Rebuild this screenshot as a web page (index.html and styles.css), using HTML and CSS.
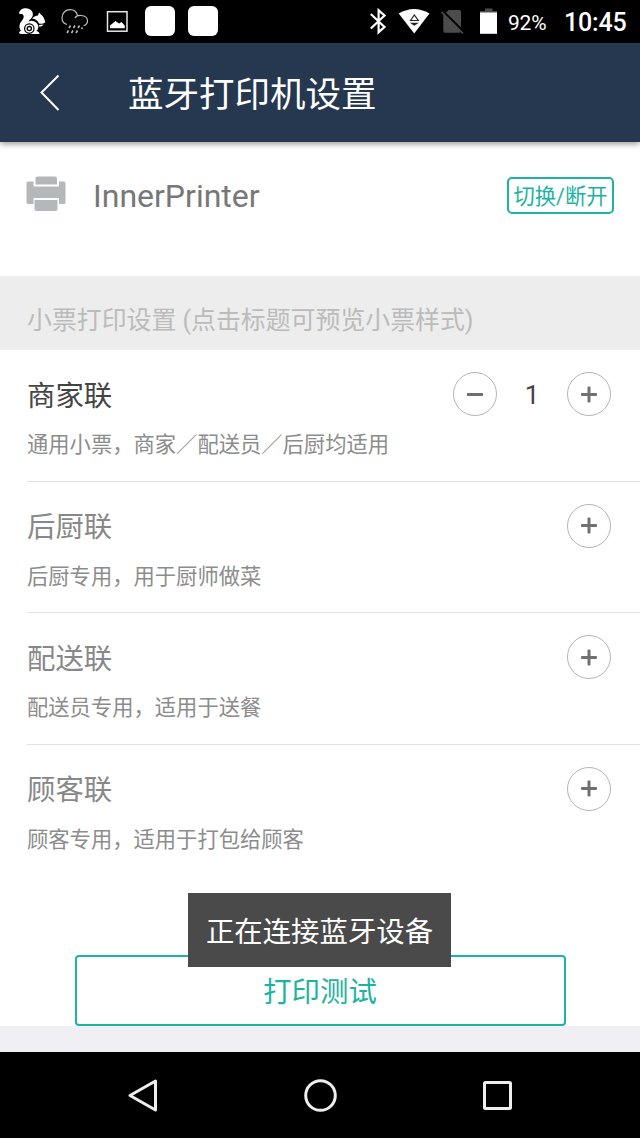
FILE: index.html
```html
<!DOCTYPE html>
<html lang="zh-CN">
<head>
  <meta charset="UTF-8" />
  <meta name="viewport" content="width=device-width, initial-scale=1.0" />
  <title>蓝牙打印机设置</title>
  <link rel="stylesheet" href="styles.css">
</head>
<body>

  <div class="status-bar">
    <div class="status-left">
      <svg width="32" height="42" viewBox="16 0 32 42">
        <path d="M19 13.500C19.500 10 22.500 8.200 26 8.300C30.500 8.500 33.500 11.500 32.800 15.500C32.300 18 29.500 19.500 28.500 21.500C33 19.500 37 22 38.300 26C38.500 28.500 37.500 30 36.500 31C38.500 31.300 39.300 32.500 39.500 34H22C18.500 34 18.200 31.500 21 31C18.300 27 19.500 23.500 22 20.500C24 18 24.300 16 22.800 14.500C21.500 13.300 20 14.500 19 13.500Z" fill="#fff"/>
        <path d="M32 18.500C34 16.500 36 15.800 38 15.500L39 12.500L41.500 15C43.500 16.500 44.500 19 45.300 22.200C43 23.800 41.500 24 39 23.600C37.500 20.500 35.500 19 32 18.500Z" fill="#fff"/>
        <path d="M39 25L43.500 24.500C42.500 26 41 26.700 39.300 26.700Z" fill="#fff"/>
        <circle cx="29.300" cy="28.600" r="4.700" fill="none" stroke="#000" stroke-width="1.200"/>
        <circle cx="29.300" cy="28.600" r="2.100" fill="none" stroke="#000" stroke-width="1.300"/>
      </svg>
      <svg class="icon-rain" width="30" height="42" viewBox="60 0 30 42">
        <path d="M67 24.500C63.500 23.500 62 21 62 18C62 13 65.500 9.700 70 9.700C74 9.700 76.700 12 77.500 15.500M75 18C76 16.200 78.500 15.300 81 15.500C85 15.800 87.500 18 87.500 20.700C87.500 23 86 25 83.500 25.800" fill="none" stroke="#bbb" stroke-width="1.200"/>
        <path d="M70.500 25.500l-1.500 2.500M75 25.500l-1.500 2.500M79.500 25.500l-1.500 2.500M82.500 27.500l-1 1.500M68.500 30.500l-1.500 2.500M73 30.500l-1.500 2.500M77.500 30.500l-1.500 2.500" stroke="#bbb" stroke-width="1.500"/>
      </svg>
      <svg class="icon-picture" width="22" height="42" viewBox="106 0 22 42">
        <rect x="107.500" y="11.700" width="19.500" height="19.500" fill="none" stroke="#e8e8e8" stroke-width="1.500"/>
        <path d="M110 28.200V25.500L115.500 21L119 23.500L121.500 22L124.700 25.500V28.200Z" fill="#fff"/>
      </svg>
      <span class="app-dot"></span>
      <span class="app-dot"></span>
    </div>
    <div class="status-right">
      <svg width="20" height="42" viewBox="368 0 20 42">
        <path d="M370.800 14L384.500 27L378.600 32.200V10.300L384.500 15.500L370.800 28.500" fill="none" stroke="#fff" stroke-width="2.200"/>
      </svg>
      <svg class="icon-wifi" width="32" height="42" viewBox="398 0 32 42">
        <path d="M398.700 13.500Q414 4.500 429.500 13.500L414.200 33.500Z" fill="#fff"/>
        <path d="M410.500 20.500L414.300 15L418.300 20.500Z" fill="#fff" stroke="#222" stroke-width="1.200"/>
        <path d="M409.800 22.700H418.900L414.300 25.700Z" fill="#222"/>
      </svg>
      <svg class="icon-sim" width="24" height="42" viewBox="441 0 24 42">
        <path d="M443.300 15.500L448.500 10H459.500Q461 10 461 11.500V31Q461 32.800 459.300 32.800H445Q443.300 32.800 443.300 31Z" fill="#4c4c4c"/>
        <path d="M442.500 10.500L464.500 32.500" stroke="#000" stroke-width="2"/>
        <path d="M441.500 12L463 33.500" stroke="#4c4c4c" stroke-width="1.600"/>
      </svg>
      <svg class="icon-battery" width="18" height="42" viewBox="480 0 18 42">
        <path d="M485 8.500H492.500V11H497V13H480V11H485Z" fill="#4c4c4c"/>
        <rect x="480" y="12.500" width="17" height="21.300" fill="#fff"/>
      </svg>
      <span class="percent">92%</span>
      <span class="clock">10:45</span>
    </div>
  </div>

  <header>
    <svg class="back" width="22" height="40" viewBox="0 0 22 40">
      <path d="M20.500 2.500L3.500 19.500L20.500 37" fill="none" stroke="#fff" stroke-width="2"/>
    </svg>
    <h1>蓝牙打印机设置</h1>
  </header>

  <main>
    <section class="device">
      <svg class="printer" width="40" height="36" viewBox="0 0 40 36">
        <path d="M9.500 8.500V2.500Q9.500 .5 11.500 .5H29Q31 .5 31 2.500V8.500Z" fill="#b4b8bb"/>
        <path d="M2 5.500H7.500V10.500H33V5.500H38Q39.500 5.500 39.500 7V26.500Q39.500 28 38 28H33V22H7.500V28H2Q.5 28 .5 26.500V7Q.5 5.500 2 5.500Z" fill="#b4b8bb"/>
        <path d="M8.500 24H31.500V33Q31.500 35 29.500 35H10.500Q8.500 35 8.500 33Z" fill="#b4b8bb"/>
      </svg>
      <span class="device-name">InnerPrinter</span>
      <button class="switch-btn">切换/断开</button>
    </section>

    <h2>小票打印设置 (点击标题可预览小票样式)</h2>

    <ul class="tickets">
      <li class="ticket active">
        <div class="ticket-head">
          <h3>商家联</h3>
          <button class="round minus" aria-label="减少"></button>
          <span class="count">1</span>
          <button class="round plus" aria-label="增加"></button>
        </div>
        <p>通用小票，商家／配送员／后厨均适用</p>
      </li>
      <li class="ticket">
        <div class="ticket-head">
          <h3>后厨联</h3>
          <button class="round plus" aria-label="增加"></button>
        </div>
        <p>后厨专用，用于厨师做菜</p>
      </li>
      <li class="ticket">
        <div class="ticket-head">
          <h3>配送联</h3>
          <button class="round plus" aria-label="增加"></button>
        </div>
        <p>配送员专用，适用于送餐</p>
      </li>
      <li class="ticket">
        <div class="ticket-head">
          <h3>顾客联</h3>
          <button class="round plus" aria-label="增加"></button>
        </div>
        <p>顾客专用，适用于打包给顾客</p>
      </li>
    </ul>

    <button class="test-btn">打印测试</button>
  </main>

  <div class="toast">正在连接蓝牙设备</div>

  <nav>
    <svg width="36" height="36" viewBox="0 0 36 36">
      <path d="M5 18.500L30.500 4V33Z" fill="none" stroke="#eee" stroke-width="3" stroke-linejoin="round"/>
    </svg>
    <svg width="36" height="36" viewBox="0 0 36 36">
      <circle cx="17.500" cy="18.500" r="14.800" fill="none" stroke="#eee" stroke-width="3"/>
    </svg>
    <svg width="36" height="36" viewBox="0 0 36 36">
      <rect x="4.500" y="5.500" width="26" height="26" rx="1" fill="none" stroke="#eee" stroke-width="3"/>
    </svg>
  </nav>

</body>
</html>
```
FILE: styles.css
```css
:root {
  --navy: #25384f;
  --teal: #1db3a2;
  --gray: #888;
  --line: #e2e2e2;
}

* {
  box-sizing: border-box;
  margin: 0;
  padding: 0;
}

body {
  font-family: Roboto, 'Noto Sans CJK SC', sans-serif;
  background: #efeff4;
  width: 640px;
  height: 1138px;
  position: relative;
  display: flex;
  flex-direction: column;
  overflow: hidden;
}

button {
  font-family: inherit;
  background: #fff;
  cursor: pointer;
}

svg {
  display: block;
  flex: none;
}

/* Barra de status */
.status-bar {
  height: 43px;
  flex: none;
  background: #000;
  color: #fff;
  display: flex;
  justify-content: space-between;
  padding: 0 14px 0 16px;
}

.status-left,
.status-right {
  display: flex;
  align-items: center;
  height: 42px;
}

.icon-rain {
  margin-left: 12px;
}

.icon-picture {
  margin: 0 17px 0 16px;
}

.app-dot {
  width: 30px;
  height: 30px;
  border-radius: 6px;
  background: #fff;
  margin-right: 13px;
}

.icon-wifi {
  margin-left: 10px;
}

.icon-sim {
  margin-left: 11px;
}

.icon-battery {
  margin-left: 15px;
}

.percent {
  width: 40px;
  margin-left: 10px;
  padding-top: 3px;
  font-size: 21px;
  line-height: 42px;
  letter-spacing: -0.2px;
  white-space: nowrap;
}

.clock {
  width: 62px;
  margin-left: 16px;
  padding-top: 4px;
  font-size: 25px;
  font-weight: 500;
  line-height: 42px;
  letter-spacing: -0.2px;
}

header {
  height: 99px;
  flex: none;
  background: var(--navy);
  box-shadow: 0 2px 6px rgba(0, 0, 0, 0.4);
  display: flex;
  align-items: center;
  padding-left: 38px;
  z-index: 1;
}

h1 {
  margin-left: 68px;
  padding-bottom: 2px;
  color: #fff;
  font-size: 35.5px;
  font-weight: 400;
}

main {
  height: 884px;
  flex: none;
  background: #fff;
  display: flex;
  flex-direction: column;
}

.device {
  height: 134px;
  flex: none;
  display: flex;
  align-items: flex-start;
  padding: 34px 26px 0;
}

.device-name {
  flex: 1;
  margin-left: 27px;
  color: #777;
  font-size: 32px;
  line-height: 41px;
}

.switch-btn {
  width: 107px;
  height: 37px;
  margin-top: 1px;
  border: 2px solid var(--teal);
  border-radius: 5px;
  color: var(--teal);
  font-size: 21.3px;
  line-height: 35px;
  white-space: nowrap;
}

h2 {
  height: 74px;
  flex: none;
  background: #ededed;
  color: #bbb;
  padding: 8px 27px 0;
  font-size: 24.9px;
  font-weight: 400;
  line-height: 74px;
}

.tickets {
  list-style: none;
  margin-left: 27px;
}

.ticket {
  height: 131.600px;
  border-bottom: 1px solid var(--line);
  padding: 22px 29px 0 0;
}

.ticket:last-child {
  border-bottom: none;
}

.ticket-head {
  height: 44px;
  display: flex;
  align-items: center;
}

h3 {
  flex: 1;
  padding-bottom: 2px;
  color: var(--gray);
  font-size: 28.4px;
  font-weight: 400;
}

.active h3 {
  color: #444;
}

.ticket p {
  color: #8c8c8c;
  font-size: 21.3px;
  line-height: 32px;
  margin-top: 13px;
}

.round {
  width: 44px;
  height: 44px;
  border: 1px solid #b5b5b5;
  border-radius: 50%;
  display: grid;
  place-items: center;
}

.round::before,
.round::after {
  content: "";
  grid-area: 1 / 1;
  width: 16px;
  height: 3px;
  border-radius: 1px;
  background: #707070;
}

.round.plus::after {
  transform: rotate(90deg);
}

.count {
  width: 70px;
  padding-top: 2px;
  text-align: center;
  color: #444;
  font-size: 26px;
}

.test-btn {
  width: 491px;
  height: 71px;
  margin: auto auto 0;
  padding-bottom: 2px;
  border: 2px solid var(--teal);
  border-radius: 4px;
  color: var(--teal);
  font-size: 28.4px;
}

/* Aviso por cima do botão de teste */
.toast {
  position: absolute;
  top: 893px;
  left: 188px;
  width: 263px;
  height: 74px;
  background: #4a4a4a;
  color: #fff;
  font-size: 28.4px;
  line-height: 79px;
  text-align: center;
  white-space: nowrap;
}

nav {
  height: 86px;
  margin-top: auto;
  background: #000;
  display: flex;
  justify-content: space-between;
  align-items: center;
  padding: 0 124px 0 125px;
}
```
